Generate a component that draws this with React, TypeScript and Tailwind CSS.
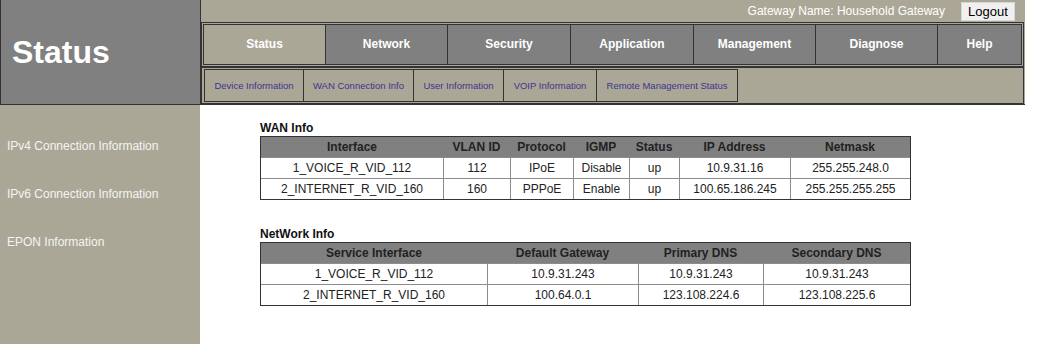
import React from "react";

const tabs = [
  { label: "Status", w: "w-[123px]", active: true },
  { label: "Network", w: "w-[122px]" },
  { label: "Security", w: "w-[123px]" },
  { label: "Application", w: "w-[123px]" },
  { label: "Management", w: "w-[122px]" },
  { label: "Diagnose", w: "w-[122px]" },
  { label: "Help", w: "flex-1" },
];

const subTabs = [
  { label: "Device Information", w: "w-[100px]" },
  { label: "WAN Connection Info", w: "w-[110px]" },
  { label: "User Information", w: "w-[90px]" },
  { label: "VOIP Information", w: "w-[93px]" },
  { label: "Remote Management Status", w: "w-[141px]" },
];

const sideItems = [
  "IPv4 Connection Information",
  "IPv6 Connection Information",
  "EPON Information",
];

const wanCols = ["w-[182px]", "w-[67px]", "w-[63px]", "w-[56px]", "w-[50px]", "w-[111px]", "w-[120px]"];
const wanHead = ["Interface", "VLAN ID", "Protocol", "IGMP", "Status", "IP Address", "Netmask"];
const wanRows = [
  ["1_VOICE_R_VID_112", "112", "IPoE", "Disable", "up", "10.9.31.16", "255.255.248.0"],
  ["2_INTERNET_R_VID_160", "160", "PPPoE", "Enable", "up", "100.65.186.245", "255.255.255.255"],
];

const netCols = ["w-[226px]", "w-[151px]", "w-[125px]", "w-[147px]"];
const netHead = ["Service Interface", "Default Gateway", "Primary DNS", "Secondary DNS"];
const netRows = [
  ["1_VOICE_R_VID_112", "10.9.31.243", "10.9.31.243", "10.9.31.243"],
  ["2_INTERNET_R_VID_160", "100.64.0.1", "123.108.224.6", "123.108.225.6"],
];

function InfoTable({ title, cols, head, rows }: { title: string; cols: string[]; head: string[]; rows: string[][] }) {
  return (
    <div>
      <div className="text-[12px] leading-[14px] font-bold text-[#111] mb-px">{title}</div>
      <div className="w-[651px] border border-[#333] text-[12px] text-[#222]">
        <div className="flex h-[20px] bg-[#808080] font-bold">
          {head.map((h, i) => (
            <div key={h} className={`${cols[i]} flex items-center justify-center`}>{h}</div>
          ))}
        </div>
        {rows.map((r, ri) => (
          <div key={ri} className="flex h-[21px] border-t border-[#8c8c8c]">
            {r.map((c, i) => (
              <div
                key={i}
                className={`${cols[i]} flex items-center justify-center ${i > 0 ? "border-l border-[#8c8c8c]" : ""}`}
              >
                {c}
              </div>
            ))}
          </div>
        ))}
      </div>
    </div>
  );
}

export default function App() {
  return (
    <div className="w-[1045px] h-[344px] bg-white overflow-hidden font-['Liberation_Sans',Arial,sans-serif]">
      {/* Header */}
      <div className="flex w-[1025px] h-[105px] border-b border-[#333] bg-[#aba797]">
        <div className="w-[201px] bg-[#808080] border-l border-r border-[#333] flex items-center pl-[11px]">
          <span className="text-[32px] font-bold text-white">Status</span>
        </div>
        <div className="flex-1 flex flex-col">
          <div className="h-[22px] flex items-center justify-end pr-[10px]">
            <span className="text-[12px] text-white mr-[16px]">Gateway Name: Household Gateway</span>
            <button className="h-[19px] w-[54px] bg-[#f0f0f0] border border-[#d8d8d8] text-[13px] leading-none text-black">
              Logout
            </button>
          </div>
          <div className="h-[45px] mr-px border border-[#333] p-px flex">
            {tabs.map((t, i) => (
              <div
                key={t.label}
                className={`${t.w} h-full border-y border-r border-[#333] ${i === 0 ? "border-l" : ""} ${t.active ? "bg-[#aba797]" : "bg-[#808080]"} flex items-center justify-center pb-[2px] text-[12px] font-bold text-white`}
              >
                {t.label}
              </div>
            ))}
          </div>
          <div className="h-[37px] mr-px border border-[#333] py-px pl-[2px] flex">
            {subTabs.map((t, i) => (
              <div
                key={t.label}
                className={`${t.w} h-full border-y border-r border-[#333] ${i === 0 ? "border-l" : ""} flex items-center justify-center pt-px text-[9.5px] text-[#3b3591]`}
              >
                {t.label}
              </div>
            ))}
          </div>
        </div>
      </div>

      {/* Body */}
      <div className="flex h-[239px]">
        <div className="w-[200px] bg-[#aba797] pt-[17px]">
          {sideItems.map((s) => (
            <div key={s} className="h-[48px] flex items-center pl-[7px] text-[12px] text-[#f4f4f4]">
              {s}
            </div>
          ))}
        </div>
        <div className="flex-1 pl-[60px] pt-[16px] flex flex-col gap-[27px]">
          <InfoTable title="WAN Info" cols={wanCols} head={wanHead} rows={wanRows} />
          <InfoTable title="NetWork Info" cols={netCols} head={netHead} rows={netRows} />
        </div>
      </div>
    </div>
  );
}
